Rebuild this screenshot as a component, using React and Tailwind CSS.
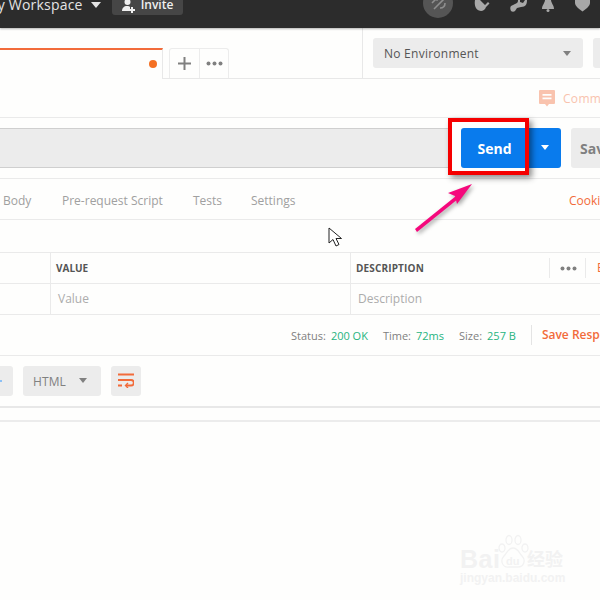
import React from "react";

const Caret = ({ className = "", w = 10, h = 6 }) => (
  <svg width={w} height={h} viewBox="0 0 10 6" preserveAspectRatio="none" className={`shrink-0 ${className}`}>
    <path d="M0 0h10L5 6z" fill="currentColor" />
  </svg>
);

const Dots = () => (
  <svg width="17" height="5" viewBox="0 0 17 5">
    <circle cx="2.5" cy="2.5" r="2" fill="#808080" />
    <circle cx="8.5" cy="2.5" r="2" fill="#808080" />
    <circle cx="14.5" cy="2.5" r="2" fill="#808080" />
  </svg>
);

function Header() {
  return (
    <div className="h-[28px] shrink-0 bg-[#2c2c2c] shadow-[0_1px_2px_rgba(0,0,0,0.3)] overflow-hidden flex items-start relative z-10">
      <div className="flex items-center h-[15px] w-[423px] shrink-0">
        <span className="text-[14px] leading-[15px] text-[#e4e4e4] ml-[-15px] font-medium whitespace-nowrap mt-[-6px] tracking-[0.2px]">My Workspace</span>
        <Caret className="text-[#e4e4e4] ml-[8px] mt-[-5px]" />
        <div className="ml-[11px] w-[71px] h-[15px] bg-[#464646] rounded-b-[3px] flex items-center pl-[10px] gap-[6px] text-[#f0f0f0] shrink-0">
          <svg width="13" height="14" viewBox="0 0 13 14" className="mt-[-3px] shrink-0">
            <circle cx="5.5" cy="3" r="3" fill="currentColor" />
            <path d="M0 12c0-3 2-5 5-5 1.500 0 2.500 .4 3 1v4z" fill="currentColor" />
            <path d="M9 8h2v2h2v2h-2v2H9v-2H7v-2h2z" fill="currentColor" />
          </svg>
          <span className="text-[12px] font-semibold leading-[15px] mt-[-6px]">Invite</span>
        </div>
      </div>
      <div className="w-[30px] h-[30px] mt-[-12px] rounded-full bg-[#555] flex items-center justify-center shrink-0 pl-[1px]">
        <svg width="18" height="16" viewBox="0 0 18 16" fill="none" stroke="#8f8f8f" strokeWidth="1.600" className="mt-[-1px]">
          <path d="M2 8 L9 1" />
          <path d="M5 3h5M7 1v5" strokeWidth="1.300" />
          <path d="M4 14 15 3" />
          <path d="M10 13c3 0 5-2 5-5" />
        </svg>
      </div>
      <svg width="147" height="12" viewBox="0 0 147 12" className="shrink-0" fill="#a8a8a8">
        <path d="M22 0h5l5 5 3-3 1.500 1.500-3.500 3.500c-1 4-5 4.500-7 3.500-3-1-5-5-4-10.500z" />
        <path d="M58 6l6-3c1-1 1-2 1-3h2v2l3 1 2-3h2c0 4-1 7-6 7l-4 1-2 3c-1 1-3 1-4 0-1-2-1-4 0-5z" />
        <path d="M92 0h6c0 3 3 5 3 9H89c0-4 3-6 3-9z" />
        <circle cx="95" cy="10.500" r="1.500" />
        <path d="M122 0h15v3c0 3-4 6-7.500 8.500C126 9 122 6 122 3z" />
      </svg>
    </div>
  );
}

function TabBar() {
  return (
    <div className="h-[51px] shrink-0 border-b border-[#e8e8e8] flex">
      <div className="w-[363px] shrink-0 border-r border-[#e8e8e8] flex items-end pt-[20px]">
        <div className="w-[163px] h-[31px] mb-[-1px] bg-[#fefefd] border-t-2 border-r border-t-[#f26b3a] border-r-[#e8e8e8] flex justify-end pt-[10px] pr-[5px] shrink-0">
          <span className="w-[8px] h-[8px] rounded-full bg-[#f47023]" />
        </div>
        <div className="ml-[6px] h-[30px] flex border border-b-0 border-[#ececec] rounded-t-[3px] shrink-0">
          <div className="w-[30px] flex items-center justify-center border-r border-[#ececec]">
            <svg width="13" height="13" viewBox="0 0 13 13">
              <path d="M5.500 0h2v5.500H13v2H7.500V13h-2V7.500H0v-2h5.500z" fill="#808080" />
            </svg>
          </div>
          <div className="w-[28px] flex items-center justify-center">
            <Dots />
          </div>
        </div>
      </div>
      <div className="ml-[10px] mt-[10px] w-[210px] h-[30px] shrink-0 rounded-[3px] bg-[#ececec] flex items-center justify-between pl-[11px] pr-[12px]">
        <span className="text-[12px] text-[#555] tracking-[0.25px] pt-[2px]">No Environment</span>
        <Caret className="text-[#808080]" w={8} h={5} />
      </div>
      <div className="ml-[10px] mt-[10px] w-[20px] h-[30px] shrink-0 rounded-l-[3px] bg-[#ececec]" />
    </div>
  );
}

function CommentRow() {
  return (
    <div className="h-[39px] shrink-0 border-b border-[#eaeaea] flex items-center pl-[539px] gap-[8px] whitespace-nowrap overflow-hidden">
      <svg width="16" height="17" viewBox="0 0 16 17" className="shrink-0">
        <path d="M1 0h14a1 1 0 0 1 1 1v12a1 1 0 0 1-1 1h-5l-2 2.500L6 14H1a1 1 0 0 1-1-1V1a1 1 0 0 1 1-1z" fill="#f9c3ae" />
        <path d="M3.500 4h9v1.700h-9zM3.500 7.500h9v1.700h-9z" fill="#fefefd" />
      </svg>
      <span className="text-[12px] text-[#f9c3ae] tracking-[0.3px] pt-[2px]">Comments</span>
    </div>
  );
}

function UrlRow() {
  return (
    <div className="h-[61px] shrink-0 border-b border-[#eaeaea] flex items-center pb-[1px] whitespace-nowrap overflow-hidden">
      <div className="w-[448px] h-[40px] shrink-0 bg-[#ececec] border-y border-[#cfcfcf]" />
      <div className="ml-[13px] w-[67px] h-[40px] shrink-0 bg-[#097bed] rounded-l-[3px] flex items-center justify-center text-white text-[14px] font-bold pt-[1px]">
        Send
      </div>
      <div className="ml-[1px] w-[32px] h-[40px] shrink-0 bg-[#097bed] rounded-r-[3px] flex items-center justify-center text-white">
        <Caret w={8} h={5} />
      </div>
      <div className="ml-[10px] w-[60px] h-[40px] shrink-0 bg-[#ececec] rounded-l-[3px] pl-[9px] flex items-center text-[14px] font-bold text-[#808080] pt-[1px]">
        Save
      </div>
    </div>
  );
}

function RequestTabs() {
  return (
    <div className="h-[41px] shrink-0 border-b border-[#eaeaea] flex items-center pl-[3px] pt-[4px] text-[12px] text-[#a0a0a0] whitespace-nowrap overflow-hidden">
      <span className="w-[59px] shrink-0">Body</span>
      <span className="w-[131px] shrink-0">Pre-request Script</span>
      <span className="w-[58px] shrink-0">Tests</span>
      <span className="w-[318px] shrink-0">Settings</span>
      <span className="text-[#f26b3a] shrink-0">Cookies</span>
    </div>
  );
}

function Params() {
  return (
    <div className="mt-[32px] border-t border-[#eaeaea] shrink-0">
      <div className="h-[31px] border-b border-[#eaeaea] flex text-[10px] font-bold text-[#555] whitespace-nowrap overflow-hidden">
        <div className="w-[51px] shrink-0 border-r border-[#eaeaea]" />
        <div className="w-[300px] shrink-0 border-r border-[#eaeaea] pl-[5px] flex items-center">VALUE</div>
        <div className="w-[198px] shrink-0 pl-[5px] flex items-center tracking-[0.15px]">DESCRIPTION</div>
        <div className="my-[5px] w-[37px] shrink-0 border-x border-[#eaeaea] flex items-center justify-center pl-[1px]">
          <Dots />
        </div>
        <span className="pl-[11px] flex items-center text-[12px] font-medium text-[#f26b3a] shrink-0">Bulk Edit</span>
      </div>
      <div className="h-[31px] border-b border-[#eaeaea] flex text-[12px] text-[#acacac] whitespace-nowrap">
        <div className="w-[51px] shrink-0 border-r border-[#eaeaea]" />
        <div className="w-[300px] shrink-0 border-r border-[#eaeaea] pl-[7px] flex items-center">Value</div>
        <div className="pl-[7px] flex items-center">Description</div>
      </div>
    </div>
  );
}

function StatusRow() {
  const Item = ({ label, value, gap = "" }) => (
    <span className={`shrink-0 pt-[2px] ${gap}`}>
      <span className="text-[#808080]">{label}</span>
      <span className="text-[#26b47f] ml-[5px]">{value}</span>
    </span>
  );
  return (
    <div className="h-[41px] shrink-0 border-b border-[#eaeaea] flex items-center pl-[291px] text-[11px] whitespace-nowrap overflow-hidden">
      <Item label="Status:" value="200 OK" />
      <Item label="Time:" value="72ms" gap="ml-[15px]" />
      <Item label="Size:" value="257 B" gap="ml-[15px]" />
      <div className="ml-[15px] w-px h-[20px] bg-[#e4e4e4] shrink-0" />
      <span className="ml-[10px] text-[12px] font-semibold text-[#f26b3a] shrink-0">Save Response</span>
    </div>
  );
}

function Toolbar() {
  return (
    <div className="h-[52px] shrink-0 border-b-2 border-[#e8e8e8] flex items-center pb-[1px]">
      <div className="w-[13px] h-[30px] bg-[#ececec] rounded-r-[3px] shrink-0 flex items-center">
        <span className="w-[2px] h-[2px] bg-[#8cc0f5]" />
      </div>
      <div className="ml-[10px] w-[78px] h-[30px] shrink-0 bg-[#ececec] rounded-[3px] flex items-center justify-between pl-[10px] pr-[14px] text-[12px] text-[#808080] tracking-[0.1px]">
        <span className="pt-[2px]">HTML</span>
        <Caret className="text-[#808080]" w={8} h={5} />
      </div>
      <div className="ml-[10px] w-[30px] h-[30px] shrink-0 bg-[#ececec] rounded-[3px] flex items-center justify-center">
        <svg width="16" height="15" viewBox="0 0 16 15" fill="none" stroke="#f26b3a" strokeWidth="1.800">
          <path d="M0 1.500h16M0 7h13a2.500 2.500 0 0 1 0 5.500H8M0 12.500h4" />
          <path d="M10 10 7.500 12.500 10 15" strokeWidth="1.400" />
        </svg>
      </div>
    </div>
  );
}

function Watermark() {
  return (
    <div className="absolute left-[460px] top-[534px] w-[110px] h-[54px] text-[#f2f2f2] select-none whitespace-nowrap">
      <span className="absolute left-0 top-[10px] text-[25px] leading-[30px] font-bold tracking-[0.5px] font-['Liberation_Sans',sans-serif]">Bai</span>
      <svg width="32" height="36" viewBox="0 0 32 36" className="absolute left-[37px] top-0" fill="none" stroke="currentColor" strokeWidth="1.300">
        <ellipse cx="5" cy="14" rx="3" ry="4" />
        <ellipse cx="12" cy="6" rx="3" ry="4.500" />
        <ellipse cx="21" cy="6" rx="3" ry="4.500" />
        <ellipse cx="28" cy="14" rx="3" ry="4" />
        <path d="M16 14c-5 0-6 5-9 8-4 4-2 12 5 11h9c6 0 8-7 4-11-3-3-4-8-9-8z" />
      </svg>
      <span className="absolute left-[46px] top-[21px] text-[11px] leading-[12px] font-bold font-['Liberation_Sans',sans-serif]">du</span>
      <span className="absolute left-[67px] top-[13px] text-[18px] leading-[22px] font-bold font-['Noto_Sans_CJK_SC',sans-serif]">经验</span>
      <span className="absolute left-0 top-[37px] text-[12px] leading-[15px] font-bold font-['Liberation_Sans',sans-serif]">jingyan.baidu.com</span>
    </div>
  );
}

function Annotations() {
  return (
    <>
      <div className="absolute left-[448px] top-[118px] w-[81px] h-[57px] border-[4px] border-[#f50000] shadow-[3px_3px_6px_rgba(0,0,0,0.45)]" />
      <svg width="70" height="60" viewBox="0 0 70 60" className="absolute left-[410px] top-[178px]">
        <g fill="#f5087c" style={{ filter: "drop-shadow(2px 2px 2px rgba(0,0,0,0.35))" }}>
          <path d="M5 51 46 18 48 21 7 54z" />
          <path d="M62 6 38 15 45 18 47 26z" />
        </g>
      </svg>
      <svg width="15" height="21" viewBox="0 0 15 21" className="absolute left-[328px] top-[227px]">
        <path d="M1 1v15l4-3.500 3 6.500 3-1.500-3-6h5.500z" fill="#fff" stroke="#222" strokeWidth="1" strokeLinejoin="round" />
      </svg>
    </>
  );
}

export default function App() {
  return (
    <div className="relative w-[600px] h-[600px] overflow-hidden bg-[#fefefd] flex flex-col font-['Open_Sans',sans-serif]">
      <Header />
      <TabBar />
      <CommentRow />
      <UrlRow />
      <RequestTabs />
      <Params />
      <StatusRow />
      <Toolbar />
      <div className="h-[14px] shrink-0 border-b-2 border-[#ececec]" />
      <Watermark />
      <Annotations />
    </div>
  );
}
